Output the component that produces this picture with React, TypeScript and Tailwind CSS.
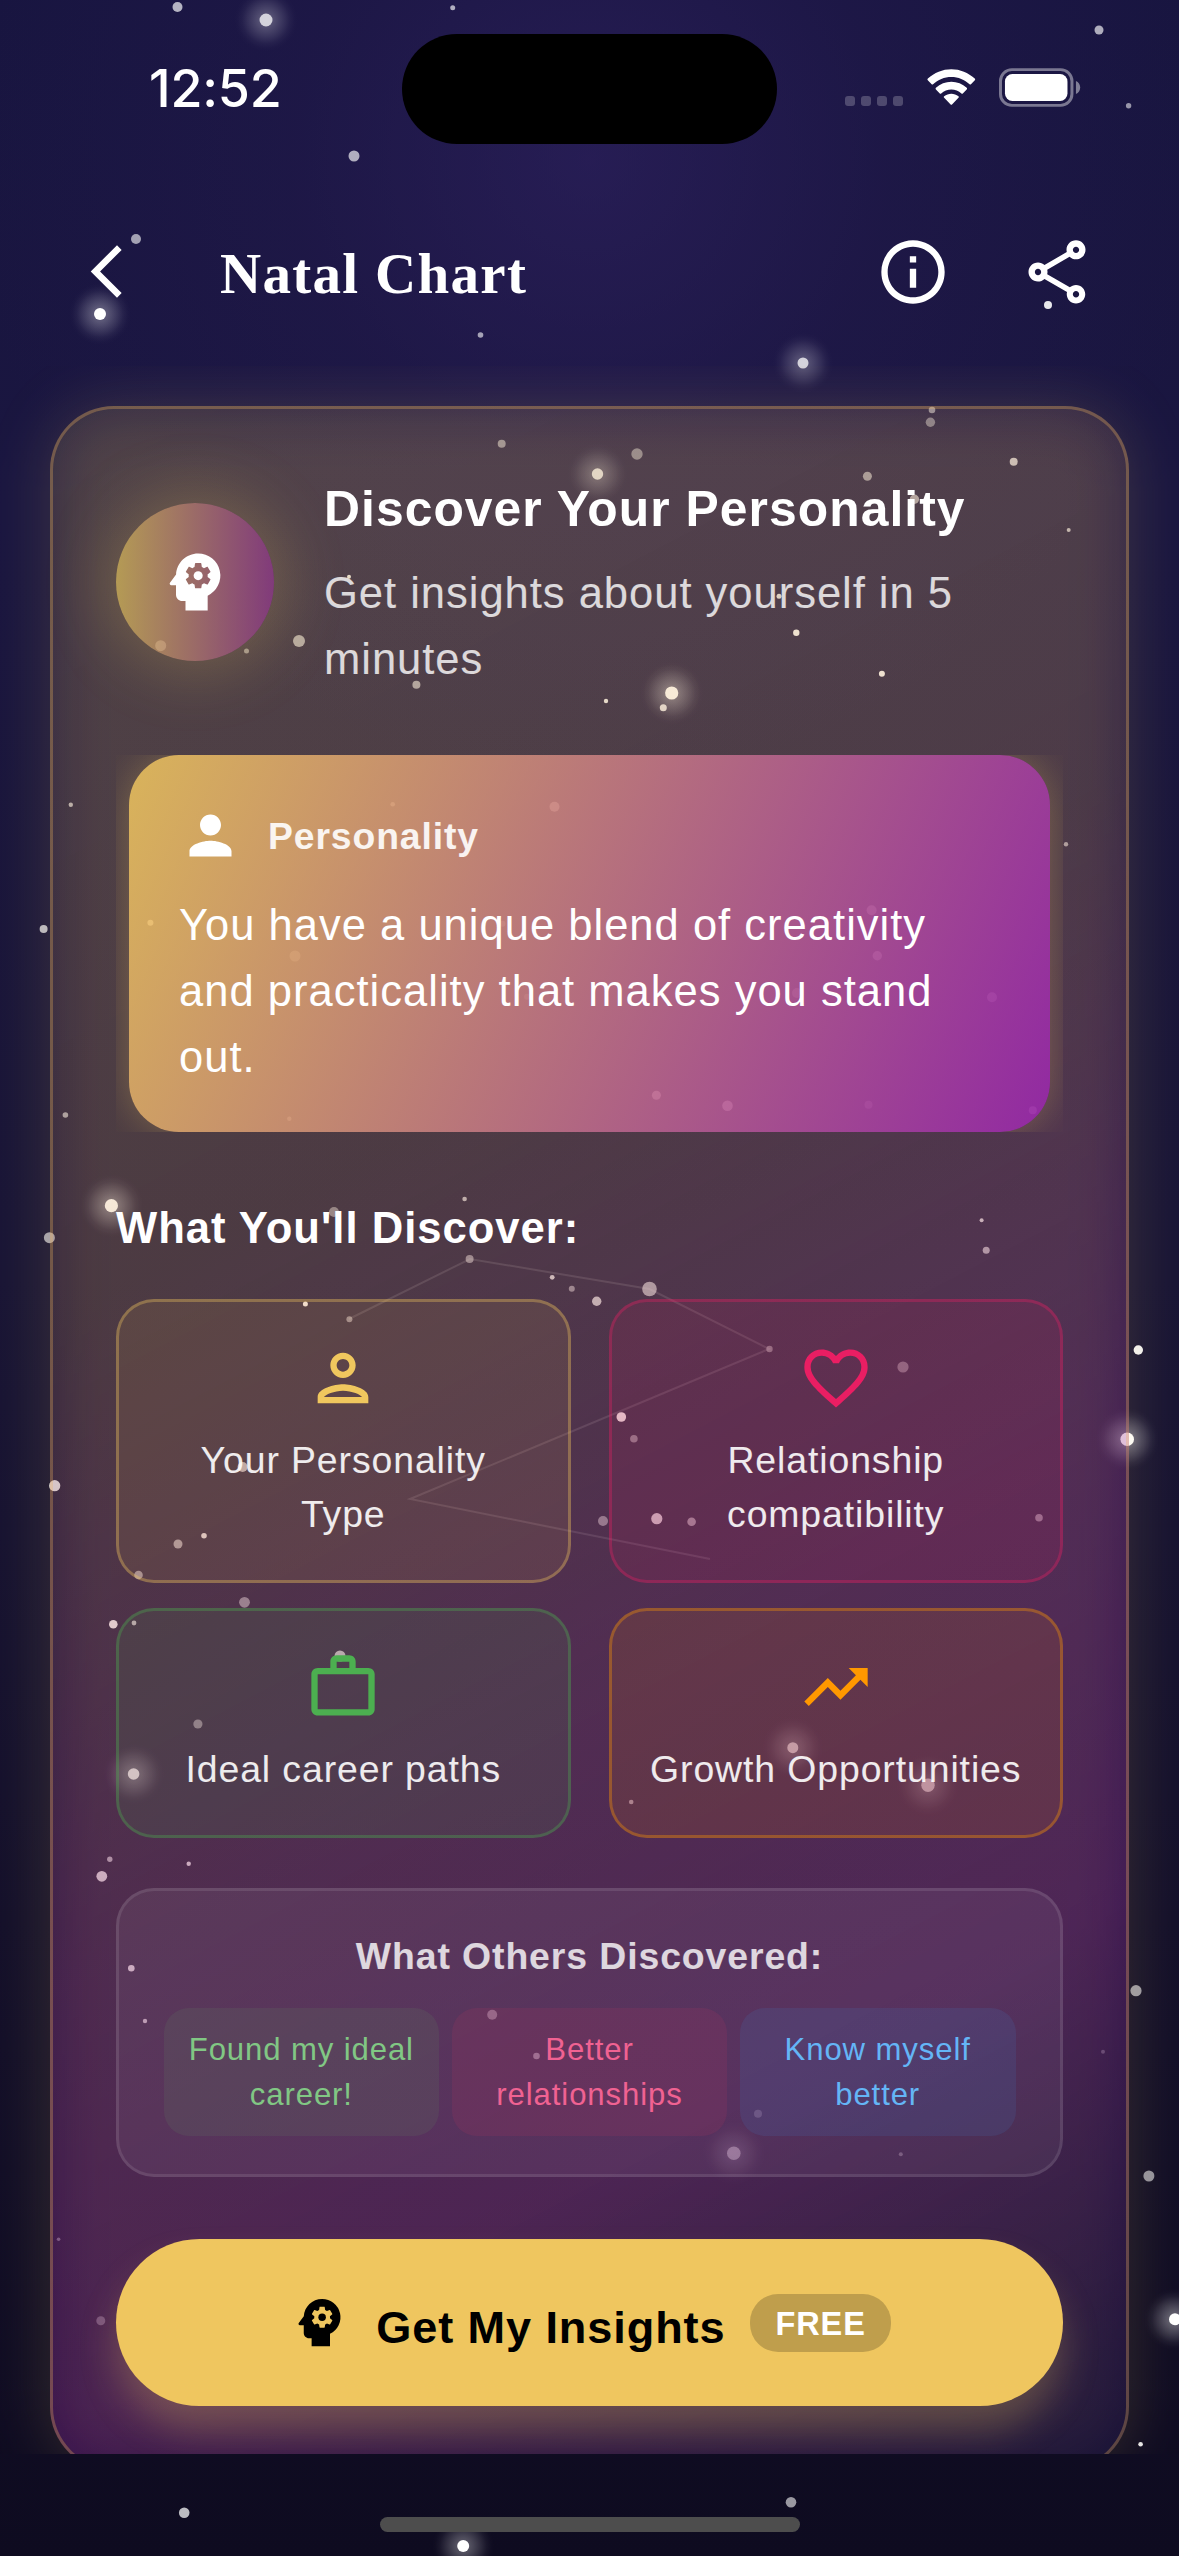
import type { ReactNode } from "react";
import {
  MdArrowBackIosNew,
  MdFavoriteBorder,
  MdInfoOutline,
  MdOutlinePerson,
  MdOutlineShare,
  MdPerson,
  MdPsychology,
  MdTrendingUp,
  MdWorkOutline,
} from "react-icons/md";

// x, y, radius, opacity, optional halo opacity
type Star = [number, number, number, number, number?];

const STARS: Star[] = [
  [177.5, 7, 5, 0.68],
  [266, 20, 6.5, 0.75, 0.3],
  [452.7, 7.7, 2.5, 0.65],
  [1099, 30, 4.5, 0.65],
  [1128.6, 105.7, 2.7, 0.55],
  [354, 156, 5.5, 0.65],
  [136, 239, 5, 0.6],
  [100, 314, 6, 1, 0.35],
  [480.5, 335, 2.8, 0.6],
  [803, 363, 5.5, 0.75, 0.28],
  [1048, 305, 4, 0.9],
  [501.7, 443.7, 4, 0.5],
  [597.5, 474, 5.7, 0.82, 0.3],
  [349, 576.7, 2, 0.9],
  [299, 641, 6, 0.62],
  [160.7, 645.7, 5.5, 0.75],
  [246.5, 651, 2.5, 0.5],
  [416.4, 684.7, 4, 0.6],
  [637, 454, 5.7, 0.45],
  [867.4, 476.3, 4.5, 0.55],
  [930.4, 422.3, 4.7, 0.42],
  [932, 410, 3.3, 0.5],
  [1013.7, 461.7, 4, 0.75],
  [914.4, 499.3, 4.7, 0.6],
  [1068.7, 530, 2, 0.7],
  [779, 596.3, 2.5, 0.85],
  [796.3, 632.7, 3.2, 0.95],
  [881.9, 673.7, 3, 0.95],
  [671.7, 693, 6.6, 1, 0.4],
  [663.3, 707.7, 3.5, 0.85],
  [606, 701, 2.2, 0.9],
  [70.8, 804.7, 2.2, 0.65],
  [43.6, 929, 4, 0.7],
  [392.7, 804.3, 2.3, 0.6],
  [554.5, 806.7, 5, 0.7],
  [150.4, 922.7, 3, 0.9],
  [295, 956, 5.5, 0.4],
  [502.5, 923.7, 3, 0.4],
  [527, 996.7, 3, 0.3],
  [65.4, 1115, 2.8, 0.6],
  [289.3, 1118.7, 2.2, 0.5],
  [871.6, 910.3, 5, 0.55],
  [877.3, 955.7, 4.7, 0.55],
  [797, 993, 5, 0.4],
  [992, 997.3, 5, 0.45],
  [656.4, 1095.3, 4.5, 0.8],
  [727.5, 1105.7, 5.3, 0.8],
  [868.5, 1104.7, 4, 0.35],
  [1032.8, 1110.3, 4, 0.5],
  [1066, 844.3, 2.2, 0.6],
  [111.4, 1205.7, 6.6, 1, 0.4],
  [49.4, 1237.7, 5.5, 0.6],
  [334, 1212, 5, 0.45],
  [464.6, 1199, 2.3, 0.7],
  [469.6, 1259, 4, 0.5],
  [552.2, 1277.3, 2.4, 0.8],
  [571.8, 1288.7, 3, 0.5],
  [596.7, 1301.3, 4.7, 0.75],
  [305.4, 1304, 2.5, 1],
  [349.4, 1319.3, 3, 0.5],
  [54.7, 1485.7, 5.6, 0.85],
  [242.6, 1467, 5, 0.7],
  [204, 1535.7, 2.8, 0.9],
  [178, 1544, 4.5, 0.6],
  [138.5, 1575, 4.3, 0.55],
  [981.6, 1220.3, 2, 0.8],
  [986.2, 1250.3, 3.5, 0.65],
  [649.5, 1289, 7.3, 0.62],
  [769.5, 1349, 3.2, 0.42],
  [903, 1367, 5.6, 0.4],
  [1138.3, 1350, 4.7, 0.95],
  [621.3, 1417, 4.8, 0.98],
  [633.9, 1438.7, 3.8, 0.45],
  [1127.2, 1439.3, 6.8, 1, 0.4],
  [603, 1521, 5, 0.48],
  [656.8, 1518.7, 5.6, 0.82],
  [691.6, 1521.7, 4.3, 0.55],
  [1039, 1517.7, 3.8, 0.5],
  [244.5, 1602.3, 5.4, 0.5],
  [113.3, 1624.3, 4.3, 0.95],
  [134, 1623, 2.4, 0.75],
  [340, 1656, 5.5, 0.8],
  [197.9, 1724, 4.6, 0.5],
  [133.6, 1774, 5.8, 0.98, 0.35],
  [109.8, 1859.3, 2.7, 0.65],
  [101.8, 1876.3, 5.4, 0.85],
  [188.7, 1863.7, 2.2, 0.85],
  [131.3, 1968.3, 3.3, 0.85],
  [145, 2021, 2.2, 0.75],
  [492.2, 2014.7, 5, 0.42],
  [536.5, 2056, 3.3, 0.5],
  [792.8, 1747.7, 5.5, 0.75, 0.28],
  [928, 1785.3, 6.7, 0.7, 0.25],
  [631.2, 1802, 2.3, 0.6],
  [1136, 1990.7, 5.6, 0.58],
  [1103, 2051.7, 2, 0.35],
  [758, 2113.7, 4, 0.25],
  [733.8, 2153.3, 6.8, 0.5, 0.2],
  [900.8, 2154.3, 2, 0.4],
  [1148.9, 2176, 5.5, 0.55],
  [58.6, 2239.3, 1.8, 0.4],
  [100.8, 2320.7, 4.5, 0.35],
  [1175, 2319.3, 6, 1, 0.4],
  [1140.6, 2444.3, 2.3, 0.9],
  [184.2, 2512.7, 5.3, 0.72],
  [791, 2502.3, 5.3, 0.58],
  [463.2, 2546, 6, 1, 0.35],
];

function Starfield() {
  return (
    <svg className="absolute inset-0 h-full w-full" viewBox="0 0 1179 2556" aria-hidden="true">
      <defs>
        <radialGradient id="halo">
          <stop offset="0" stopColor="#fff" stopOpacity="0.9" />
          <stop offset="0.25" stopColor="#fff" stopOpacity="0.78" />
          <stop offset="0.5" stopColor="#fff" stopOpacity="0.46" />
          <stop offset="0.75" stopColor="#fff" stopOpacity="0.14" />
          <stop offset="0.9" stopColor="#fff" stopOpacity="0.03" />
          <stop offset="1" stopColor="#fff" stopOpacity="0" />
        </radialGradient>
      </defs>
      <path
        d="M349 1319 470 1259 649.5 1289 769 1349 410 1499 710 1559"
        fill="none"
        stroke="#fff"
        strokeOpacity="0.13"
        strokeWidth="2"
      />
      {STARS.map(([x, y, r, opacity, halo], i) => (
        <g key={i} fill="#fff">
          {halo !== undefined && <circle cx={x} cy={y} r={r + 25} fill="url(#halo)" opacity={halo} />}
          <circle cx={x} cy={y} r={r} opacity={opacity} />
        </g>
      ))}
    </svg>
  );
}

function StatusBar() {
  return (
    <div className="flex h-[180px] items-start pl-[149px] pt-[34px]">
      <div className="mt-[23px] w-[253px] font-[Inter] text-[52px] font-medium leading-[63px] tracking-[-0.2px] text-white">12:52</div>
      <div className="h-[110px] w-[375px] rounded-full bg-black" />
      <div className="ml-[68px] mt-[34px] flex w-[236px] items-start">
        <div className="mt-[28px] flex gap-[6px]">
          {[0, 1, 2, 3].map((i) => (
            <span key={i} className="size-[10px] rounded-[3px] bg-white/22" />
          ))}
        </div>
        <svg className="ml-[23px] mt-[1px] h-[38px] w-[51px]" viewBox="0 0 51 38" fill="#fff">
          <path d="M25.5 7.8c7 0 13.5 2.7 18.4 7.4.4.4 1 .4 1.4 0l3.9-4c.5-.5.5-1.200-.1-1.700C42.700 3.400 34.300 0 25.500 0S8.300 3.400 1.900 9.500c-.6.5-.6 1.200-.1 1.700l3.900 4c.4.4 1 .4 1.400 0C12 10.500 18.500 7.800 25.500 7.800Z" />
          <path d="M25.500 20.500c3.800 0 7.400 1.400 10.200 4 .4.400 1 .400 1.400 0l3.900-4c.5-.5.5-1.200 0-1.700-4.200-4-9.700-6.200-15.500-6.200S14.200 14.800 10 18.800c-.5.5-.5 1.200 0 1.700l3.900 4c.4.400 1 .400 1.400 0 2.800-2.600 6.400-4 10.200-4Z" />
          <path d="M32.700 28.900c.5-.5.5-1.200 0-1.600-4.200-3.500-10.200-3.500-14.400 0-.5.400-.5 1.100 0 1.600l6.500 6.700c.4.500 1 .5 1.400 0Z" />
        </svg>
        <svg className="ml-[22px] h-[39px] w-[83px]" viewBox="0 0 83 39" fill="none">
          <rect x="1.500" y="1.500" width="72" height="36" rx="11.500" stroke="#fff" strokeOpacity="0.42" strokeWidth="3" />
          <rect x="6" y="6" width="63" height="27" rx="7.500" fill="#fff" />
          <path d="M77.500 13v13c2.600-1.100 4.300-3.600 4.300-6.500s-1.700-5.400-4.300-6.500Z" fill="#fff" fillOpacity="0.45" />
        </svg>
      </div>
    </div>
  );
}

function Header() {
  return (
    <header className="flex h-[186px] items-center pb-[3px] pl-[75px] pr-[84px] text-white">
      <MdArrowBackIosNew size={63} />
      <h1 className="ml-[82px] flex-1 pt-[5px] font-['Liberation_Serif',serif] text-[57px] font-bold leading-[64px] tracking-[1.3px]">
        Natal Chart
      </h1>
      <MdInfoOutline size={76} />
      <MdOutlineShare className="ml-[68px]" size={76} />
    </header>
  );
}

function Tile({ className, icon, children }: { className: string; icon: ReactNode; children: ReactNode }) {
  return (
    <div className={"flex flex-col items-center rounded-[38px] border-[3px] px-[36px] pb-[39px] pt-[38px] " + className}>
      {icon}
      <p className="mt-[17px] text-center text-[37.4px] leading-[54px] tracking-[0.9px] text-white/90">{children}</p>
    </div>
  );
}

function Quote({ className, children }: { className: string; children: ReactNode }) {
  return (
    <div className={"flex-1 rounded-[25px] px-[12px] py-[19px] text-center text-[31.1px] leading-[45px] tracking-[0.9px] " + className}>
      {children}
    </div>
  );
}

export default function App() {
  return (
    <div className="relative flex h-[2556px] w-[1179px] flex-col overflow-hidden bg-[radial-gradient(circle_at_590px_160px,rgba(52,36,104,0.5)_0px,rgba(40,28,84,0.3)_300px,rgba(40,28,84,0)_620px),linear-gradient(180deg,#181540_0%,#1a1640_20%,#191535_50%,#130f28_80%,#0e0b20_100%)] font-['Liberation_Sans',Arial,sans-serif]">
      <Starfield />

      <div className="relative">
        <StatusBar />
        <Header />
      </div>

      <main className="relative h-[2088px] overflow-hidden px-[50px] pt-[40px]">
        <section className="relative h-[2065px]">
          <div className="absolute inset-0 rounded-[64px] bg-[rgba(240,199,94,0.17)] blur-[30px]" />
          <div className="relative h-full rounded-[64px] border-[3px] border-[rgba(240,180,94,0.31)] bg-[linear-gradient(152.4deg,rgba(240,199,94,0.1)_0%,rgba(200,120,120,0.12)_35%,rgba(145,38,160,0.27)_60%,rgba(125,22,160,0.33)_78%,rgba(24,18,66,0.6)_100%)] bg-origin-border px-[63px] pt-[62px]">
            <div className="flex items-center">
              <div className="flex size-[158px] shrink-0 items-center justify-center rounded-full bg-[linear-gradient(90deg,rgba(206,177,88,0.8),rgba(141,57,135,0.8))] text-white shadow-[0_0_64px_10px_rgba(240,199,94,0.24)]">
                <MdPsychology size={76} />
              </div>
              <div className="ml-[50px]">
                <h2 className="whitespace-nowrap text-[49.8px] font-bold leading-[76px] tracking-[1.05px] text-white">Discover Your Personality</h2>
                <p className="mt-[13px] text-[43.6px] leading-[66px] tracking-[0.95px] text-white/80">
                  Get insights about yourself in 5 minutes
                </p>
              </div>
            </div>

            <div className="mt-[63px] h-[377px] overflow-hidden px-[13px]">
              <div className="h-full rounded-[50px] bg-[linear-gradient(112.3deg,rgba(240,199,94,0.86)_0%,rgba(156,39,176,0.86)_100%)] px-[50px] pt-[49px] shadow-[0_0_38px_rgba(240,199,94,0.3)]">
                <div className="flex items-center">
                  <MdPerson size={63} className="text-white" />
                  <span className="ml-[26px] text-[37.3px] font-bold leading-[54px] tracking-[0.9px] text-white/90">Personality</span>
                </div>
                <p className="mt-[25px] text-[43.5px] leading-[66px] tracking-[1.02px] text-white">
                  You have a unique blend of creativity and practicality that makes you stand out.
                </p>
              </div>
            </div>

            <h3 className="mt-[63px] text-[43.6px] font-bold leading-[66px] tracking-[1px] text-white">What You'll Discover:</h3>

            <div className="mt-[38px] grid grid-cols-2 gap-x-[38px] gap-y-[25px]">
              <Tile
                className="border-[rgba(240,199,94,0.35)] bg-[rgba(240,199,94,0.09)]"
                icon={<MdOutlinePerson size={76} className="text-[#f0c75e]" />}
              >
                Your Personality Type
              </Tile>
              <Tile
                className="border-[rgba(233,30,99,0.33)] bg-[rgba(233,30,99,0.1)]"
                icon={<MdFavoriteBorder size={76} className="text-[#e91e63]" />}
              >
                Relationship compatibility
              </Tile>
              <Tile
                className="border-[rgba(76,175,80,0.33)] bg-[rgba(76,175,80,0.1)]"
                icon={<MdWorkOutline size={76} className="text-[#4caf50]" />}
              >
                Ideal career paths
              </Tile>
              <Tile
                className="whitespace-nowrap border-[rgba(255,152,0,0.35)] bg-[rgba(255,152,0,0.1)]"
                icon={<MdTrendingUp size={76} className="text-[#ff9800]" />}
              >
                Growth Opportunities
              </Tile>
            </div>

            <div className="mt-[50px] rounded-[38px] border-[3px] border-white/10 bg-white/6 px-[44.5px] py-[38px]">
              <h4 className="text-center text-[37.4px] font-bold leading-[54px] tracking-[0.9px] text-white/80">What Others Discovered:</h4>
              <div className="mt-[25px] flex gap-[12.5px]">
                <Quote className="bg-[rgba(100,175,100,0.11)] text-[#81c784]">Found my ideal career!</Quote>
                <Quote className="bg-[rgba(233,60,99,0.1)] text-[#f06292]">Better relationships</Quote>
                <Quote className="bg-[rgba(60,140,220,0.13)] text-[#64b5f6]">Know myself better</Quote>
              </div>
            </div>

            <button className="mt-[62px] flex h-[167px] w-full items-center justify-center rounded-full bg-[#efc65f] shadow-[0_25px_36px_rgba(240,199,94,0.26)]">
              <MdPsychology size={63} className="text-black" />
              <span className="ml-[25px] pt-[11px] text-[45.1px] font-bold leading-[60px] tracking-[0.9px] text-black">Get My Insights</span>
              <span className="ml-[25px] rounded-[28px] bg-black/20 px-[25px] pb-[6px] pt-[9px] text-[32.5px] font-bold leading-[43px] tracking-[0.9px] text-white">
                FREE
              </span>
            </button>
          </div>
        </section>
      </main>

      <div className="relative flex h-[102px] justify-center pt-[63px]">
        <div className="h-[15px] w-[420px] rounded-full bg-[#4d4d4d]" />
      </div>
    </div>
  );
}
